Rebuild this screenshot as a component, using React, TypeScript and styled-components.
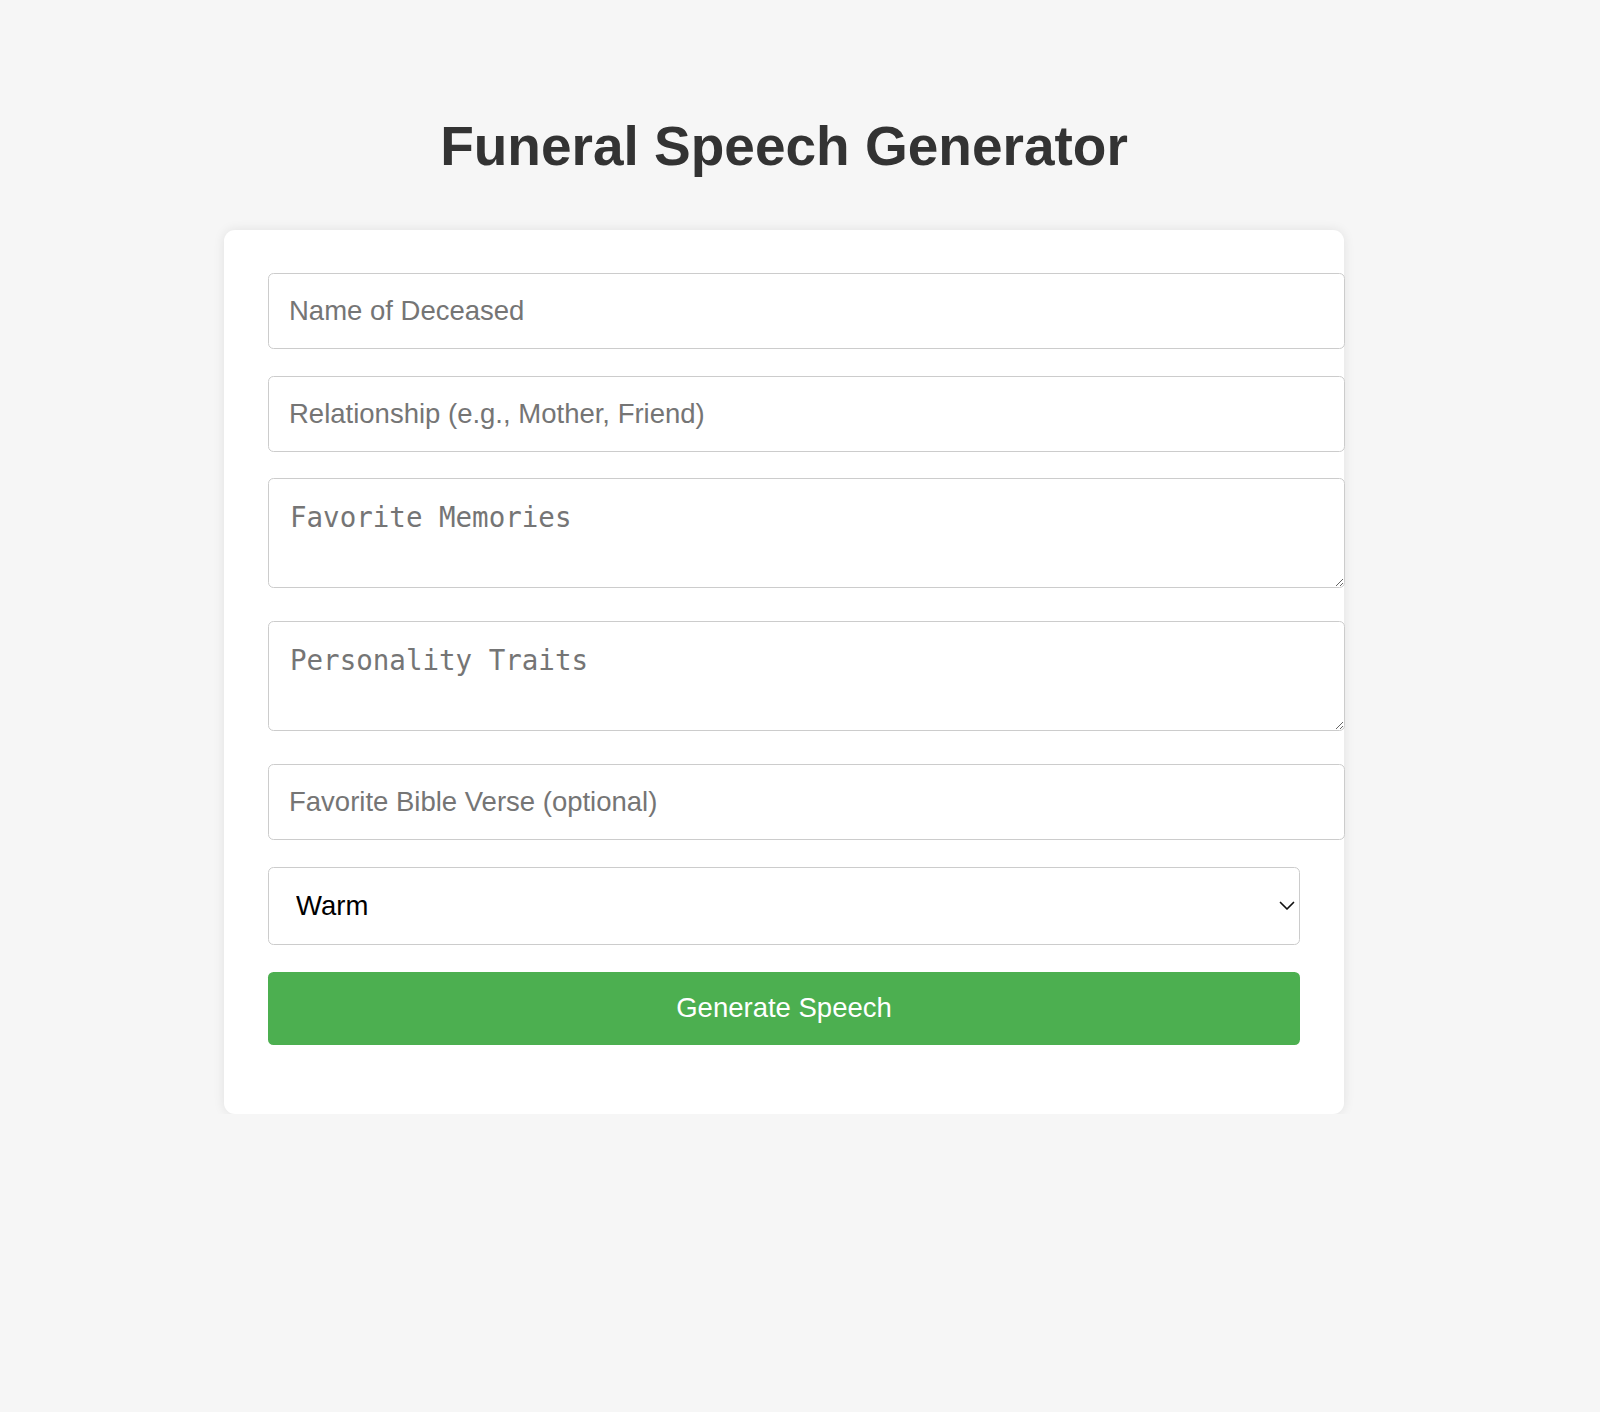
import { FC, useState } from "react";
import { styled, createGlobalStyle } from "styled-components";

const GlobalStyle = createGlobalStyle`
  html, body {
    margin: 0;
    padding: 0;
    background-color: #f6f6f6;
    font-family: "Liberation Sans", Arial, sans-serif;
  }
`;

const tones = ["Warm", "Formal", "Uplifting", "Humorous"];

const App: FC = () => {
  const [tone, setTone] = useState("Warm");

  return (
    <>
      <GlobalStyle />
      <Page>
        <Title>Funeral Speech Generator</Title>
        <Card>
          <TextInput type="text" placeholder="Name of Deceased" />
          <TextInput type="text" placeholder="Relationship (e.g., Mother, Friend)" />
          <TextArea rows={2} placeholder="Favorite Memories" />
          <TextArea rows={2} placeholder="Personality Traits" />
          <TextInput type="text" placeholder="Favorite Bible Verse (optional)" />
          <SelectWrap>
            <Select value={tone} onChange={(e) => setTone(e.target.value)}>
              {tones.map((t) => (
                <option key={t} value={t}>
                  {t}
                </option>
              ))}
            </Select>
            <Chevron width="16" height="10" viewBox="0 0 16 10">
              <polyline points="1.5,1.5 8,8 14.5,1.5" />
            </Chevron>
          </SelectWrap>
          <GenerateButton type="button">Generate Speech</GenerateButton>
        </Card>
      </Page>
    </>
  );
};
export default App;

const Page = styled.div`
  width: 1568px;
  padding-top: 114px;
  box-sizing: border-box;
`;

const Title = styled.h1`
  margin: 0 0 52px;
  text-align: center;
  font-size: 55px;
  font-weight: bold;
  color: #333333;
`;

const Card = styled.div`
  width: 1120px;
  box-sizing: border-box;
  margin: 0 auto;
  padding: 43px 44px 69px;
  background-color: #ffffff;
  border-radius: 11px;
  box-shadow: 0 0 12px rgba(0, 0, 0, 0.09);
`;

/* inputs are wider than the card content, like content-box width: 100% plus padding */
const TextInput = styled.input`
  display: block;
  width: calc(100% + 45px);
  height: 76px;
  box-sizing: border-box;
  margin: 0 0 26.5px;
  padding: 0 20px;
  border: 1px solid #cccccc;
  border-radius: 5.5px;
  font-family: "Liberation Sans", Arial, sans-serif;
  font-size: 27.5px;
  color: #333333;
  background: #ffffff;
  outline: none;
  &::placeholder {
    color: #757575;
  }
`;

const TextArea = styled.textarea`
  display: block;
  width: calc(100% + 45px);
  box-sizing: border-box;
  margin: 0 0 33px;
  padding: 22px 21px;
  border: 1px solid #cccccc;
  border-radius: 5.5px;
  font-family: "DejaVu Sans Mono", monospace;
  font-size: 27.5px;
  color: #333333;
  background: #ffffff;
  outline: none;
  &::placeholder {
    color: #757575;
  }
`;

const SelectWrap = styled.div`
  position: relative;
  margin: 0 0 27px;
`;

const Select = styled.select`
  display: block;
  width: 100%;
  height: 78px;
  box-sizing: border-box;
  padding: 0 27px;
  appearance: none;
  -webkit-appearance: none;
  border: 1px solid #cccccc;
  border-radius: 5.5px;
  background: #ffffff;
  font-family: "Liberation Sans", Arial, sans-serif;
  font-size: 27.5px;
  color: #000000;
  outline: none;
`;

const Chevron = styled.svg`
  position: absolute;
  right: 5px;
  top: 34px;
  pointer-events: none;
  fill: none;
  stroke: #111111;
  stroke-width: 1.7;
  stroke-linecap: round;
  stroke-linejoin: round;
`;

const GenerateButton = styled.button`
  display: block;
  width: 100%;
  height: 73.5px;
  border: none;
  border-radius: 5.5px;
  background-color: #4caf50;
  color: #ffffff;
  font-family: "Liberation Sans", Arial, sans-serif;
  font-size: 27.5px;
  cursor: pointer;
`;
